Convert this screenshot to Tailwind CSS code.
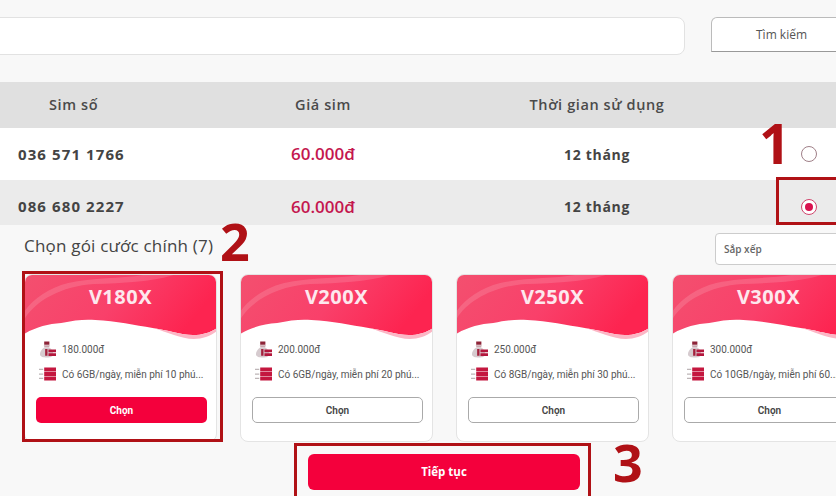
<!DOCTYPE html>
<html lang="vi">
<head>
  <meta charset="UTF-8" />
  <meta name="viewport" content="width=device-width, initial-scale=1.0" />
  <title>Chọn sim và gói cước</title>
  <script src="https://cdn.jsdelivr.net/npm/@tailwindcss/browser@4"></script>
</head>
<body class="bg-[#f8f8f8] font-['Open_Sans',sans-serif] text-[#444]">
  <svg class="absolute w-0 h-0" aria-hidden="true">
    <defs>
      <linearGradient id="waveFill" x1="0" y1="0" x2="1" y2="0.25">
        <stop offset="0" stop-color="#f3506f" />
        <stop offset="0.55" stop-color="#f9406a" />
        <stop offset="1" stop-color="#fd2450" />
      </linearGradient>
      <symbol id="wave" viewBox="0 0 192 66" preserveAspectRatio="none">
        <path d="M0 60C12 53 24 50 37 49C50 46 62 45 71 46C92 47 110 51 128 54C145 57 158 65 170 65C179 65 187 60 192 56V66H0Z" fill="#fff" />
        <path d="M0 60C12 53 24 50 37 49C50 46 62 45 71 46C92 47 110 51 128 54C143 56 156 61 168 61C178 61 186 58 192 54V0H0Z" fill="url(#waveFill)" />
        <path d="M128 54C143 56 156 61 168 61C178 61 186 58 192 54V57C186 62 178 65 169 65C156 65 143 58 128 54Z" fill="#fcb6c5" />
        <path d="M0 46C10 28 36 12 70 10C100 9 128 8 152 0H124C100 5 70 3 44 9C24 14 8 26 0 38Z" fill="#fff" fill-opacity="0.14" />
      </symbol>
      <symbol id="bag" viewBox="0 0 18 18">
        <path d="M5.500 0.500H11V4H5.500Z" fill="#8d2438" />
        <path d="M5 4.500H11.500L10.500 7H6Z" fill="#c9a6ae" />
        <path d="M5.500 7H11C14 9 15 12 15 14C15 16.500 12 17.500 8.500 17.500C4 17.500 1 16.500 1 14C1 12 2.500 9 5.500 7Z" fill="#d6cbcf" />
        <path d="M6.500 8.500H9V15.500H6.500Z" fill="#a3203c" />
        <path d="M10 9H18V11.800H10ZM10 13H18V15.800H10Z" fill="#b3163c" />
      </symbol>
      <symbol id="stack" viewBox="0 0 18 14">
        <path d="M5.500 0H18V4.400H5.500ZM5.500 4.900H18V9.300H5.500ZM5.500 9.800H18V14H5.500Z" fill="#c4173f" />
        <path d="M0 1.500H4.500V2.800H0ZM0 6.400H4.500V7.700H0ZM0 11H4.500V12.300H0Z" fill="#bdb5b7" />
      </symbol>
    </defs>
  </svg>

  <div class="relative w-[836px] h-[496px] overflow-hidden">
    <div class="flex items-start pt-[17px] h-[82px]">
      <div class="-ml-2 w-[693px] h-[38px] shrink-0 bg-white border border-[#e2e2e2] rounded-lg"></div>
      <button class="ml-[26px] w-[140px] h-[35px] shrink-0 bg-white border border-[#bbb] border-b-[#999] rounded-t-md text-left pl-[44px] text-[12px] font-medium text-[#555]">Tìm kiếm</button>
    </div>

    <div class="grid grid-cols-[215px_216px_332px_73px] items-center h-[46px] bg-[#e0e0e0] text-[14.500px] font-semibold tracking-[0.6px] text-[#4a4a4a]">
      <div class="pl-[49px]">Sim số</div>
      <div class="text-center">Giá sim</div>
      <div class="text-center">Thời gian sử dụng</div>
      <div></div>
    </div>
    <div class="grid grid-cols-[215px_216px_332px_73px] items-center h-[52px] bg-white">
      <div class="pl-[18px] text-[15px] font-bold tracking-[1.1px]">036 571 1766</div>
      <div class="text-center text-[17px] font-semibold text-[#c4174f]">60.000đ</div>
      <div class="text-center text-[14px] font-bold tracking-[0.7px]">12 tháng</div>
      <div class="flex justify-end pr-[19px]">
        <span class="w-4 h-4 rounded-full border border-[#a08088] bg-white"></span>
      </div>
    </div>
    <div class="grid grid-cols-[215px_216px_332px_73px] items-center h-[45px] pt-2 bg-[#ebebeb]">
      <div class="pl-[18px] text-[15px] font-bold tracking-[1.1px]">086 680 2227</div>
      <div class="text-center text-[17px] font-semibold text-[#c4174f]">60.000đ</div>
      <div class="text-center text-[14px] font-bold tracking-[0.7px]">12 tháng</div>
      <div class="flex justify-end pr-[19px]">
        <span class="w-4 h-4 rounded-full border border-[#d0446c] bg-white flex items-center justify-center">
          <span class="w-2 h-2 rounded-full bg-[#d9114f]"></span>
        </span>
      </div>
    </div>

    <div class="flex items-start justify-between h-[49px]">
      <h2 class="pl-6 pt-[10px] text-[17px] font-medium leading-[22px] tracking-[0.2px]">Chọn gói cước chính (7)</h2>
      <div class="mt-2 w-[130px] -mr-[9px] h-[32px] shrink-0 bg-white border border-[#ccc] rounded pl-2 text-[10px] font-semibold leading-[30px] text-[#666]">Sắp xếp</div>
    </div>

    <div class="flex gap-[23px] pl-6 h-[168px] font-['Roboto',sans-serif]">
      <div class="relative w-[193px] h-[168px] shrink-0 bg-white rounded-lg border border-[#e4e4e4] overflow-hidden">
        <svg class="absolute -top-px -left-px w-[193px] h-[66px]"><use href="#wave" /></svg>
        <div class="relative text-center text-[20px] font-bold font-['Noto_Sans',sans-serif] tracking-[0.5px] text-[#fde8ee] leading-[24px] pt-[10px]">V180X</div>
        <div class="relative mt-[31px] pl-[14px] flex items-center gap-[6px] text-[10px] h-[18px] text-[#555]">
          <svg class="w-[17px] h-[17px]"><use href="#bag" /></svg><span>180.000đ</span>
        </div>
        <div class="relative mt-[7px] pl-[14px] flex items-center gap-[6px] text-[10px] h-[18px] text-[#555]">
          <svg class="w-[17px] h-[14px]"><use href="#stack" /></svg><span>Có 6GB/ngày, miễn phí 10 phú...</span>
        </div>
        <button class="relative block mt-[14px] ml-[11px] w-[171px] h-[26px] rounded-[5px] bg-[#f4003c] text-white text-[10px] font-bold">Chọn</button>
      </div>
      <div class="relative w-[193px] h-[168px] shrink-0 bg-white rounded-lg border border-[#e4e4e4] overflow-hidden">
        <svg class="absolute -top-px -left-px w-[193px] h-[66px]"><use href="#wave" /></svg>
        <div class="relative text-center text-[20px] font-bold font-['Noto_Sans',sans-serif] tracking-[0.5px] text-[#fde8ee] leading-[24px] pt-[10px]">V200X</div>
        <div class="relative mt-[31px] pl-[14px] flex items-center gap-[6px] text-[10px] h-[18px] text-[#555]">
          <svg class="w-[17px] h-[17px]"><use href="#bag" /></svg><span>200.000đ</span>
        </div>
        <div class="relative mt-[7px] pl-[14px] flex items-center gap-[6px] text-[10px] h-[18px] text-[#555]">
          <svg class="w-[17px] h-[14px]"><use href="#stack" /></svg><span>Có 6GB/ngày, miễn phí 20 phú...</span>
        </div>
        <button class="relative block mt-[14px] ml-[11px] w-[171px] h-[26px] rounded-[5px] bg-white border border-[#aaa] text-[#444] text-[10px] font-semibold">Chọn</button>
      </div>
      <div class="relative w-[193px] h-[168px] shrink-0 bg-white rounded-lg border border-[#e4e4e4] overflow-hidden">
        <svg class="absolute -top-px -left-px w-[193px] h-[66px]"><use href="#wave" /></svg>
        <div class="relative text-center text-[20px] font-bold font-['Noto_Sans',sans-serif] tracking-[0.5px] text-[#fde8ee] leading-[24px] pt-[10px]">V250X</div>
        <div class="relative mt-[31px] pl-[14px] flex items-center gap-[6px] text-[10px] h-[18px] text-[#555]">
          <svg class="w-[17px] h-[17px]"><use href="#bag" /></svg><span>250.000đ</span>
        </div>
        <div class="relative mt-[7px] pl-[14px] flex items-center gap-[6px] text-[10px] h-[18px] text-[#555]">
          <svg class="w-[17px] h-[14px]"><use href="#stack" /></svg><span>Có 8GB/ngày, miễn phí 30 phú...</span>
        </div>
        <button class="relative block mt-[14px] ml-[11px] w-[171px] h-[26px] rounded-[5px] bg-white border border-[#aaa] text-[#444] text-[10px] font-semibold">Chọn</button>
      </div>
      <div class="relative w-[193px] h-[168px] shrink-0 bg-white rounded-lg border border-[#e4e4e4] overflow-hidden">
        <svg class="absolute -top-px -left-px w-[193px] h-[66px]"><use href="#wave" /></svg>
        <div class="relative text-center text-[20px] font-bold font-['Noto_Sans',sans-serif] tracking-[0.5px] text-[#fde8ee] leading-[24px] pt-[10px]">V300X</div>
        <div class="relative mt-[31px] pl-[14px] flex items-center gap-[6px] text-[10px] h-[18px] text-[#555]">
          <svg class="w-[17px] h-[17px]"><use href="#bag" /></svg><span>300.000đ</span>
        </div>
        <div class="relative mt-[7px] pl-[14px] flex items-center gap-[6px] text-[10px] h-[18px] text-[#555]">
          <svg class="w-[17px] h-[14px]"><use href="#stack" /></svg><span>Có 10GB/ngày, miễn phí 60...</span>
        </div>
        <button class="relative block mt-[14px] ml-[11px] w-[171px] h-[26px] rounded-[5px] bg-white border border-[#aaa] text-[#444] text-[10px] font-semibold">Chọn</button>
      </div>
    </div>

    <div class="pt-3 pl-[308px]">
      <button class="w-[272px] h-[36px] rounded-md bg-[#f4003c] text-white text-[11.500px] font-bold">Tiếp tục</button>
    </div>

    <!-- annotations drawn over the screenshot -->
    <div class="absolute left-[776px] top-[177px] w-[70px] h-[48px] border-[3px] border-[#b01116]"></div>
    <div class="absolute left-[22px] top-[271px] w-[201px] h-[171px] border-[3px] border-[#b01116]"></div>
    <div class="absolute left-[294px] top-[443px] w-[297px] h-[60px] border-[3px] border-[#b01116]"></div>
    <span class="absolute left-[759px] top-[112px] text-[55px] leading-[62px] font-bold font-['Open_Sans',sans-serif] text-[#b01116]">1</span>
    <span class="absolute left-[220px] top-[210px] text-[52px] leading-[62px] font-bold font-['Open_Sans',sans-serif] text-[#b01116]">2</span>
    <span class="absolute left-[613px] top-[431px] text-[52px] leading-[62px] font-bold font-['Open_Sans',sans-serif] text-[#b01116]">3</span>
  </div>
</body>
</html>
